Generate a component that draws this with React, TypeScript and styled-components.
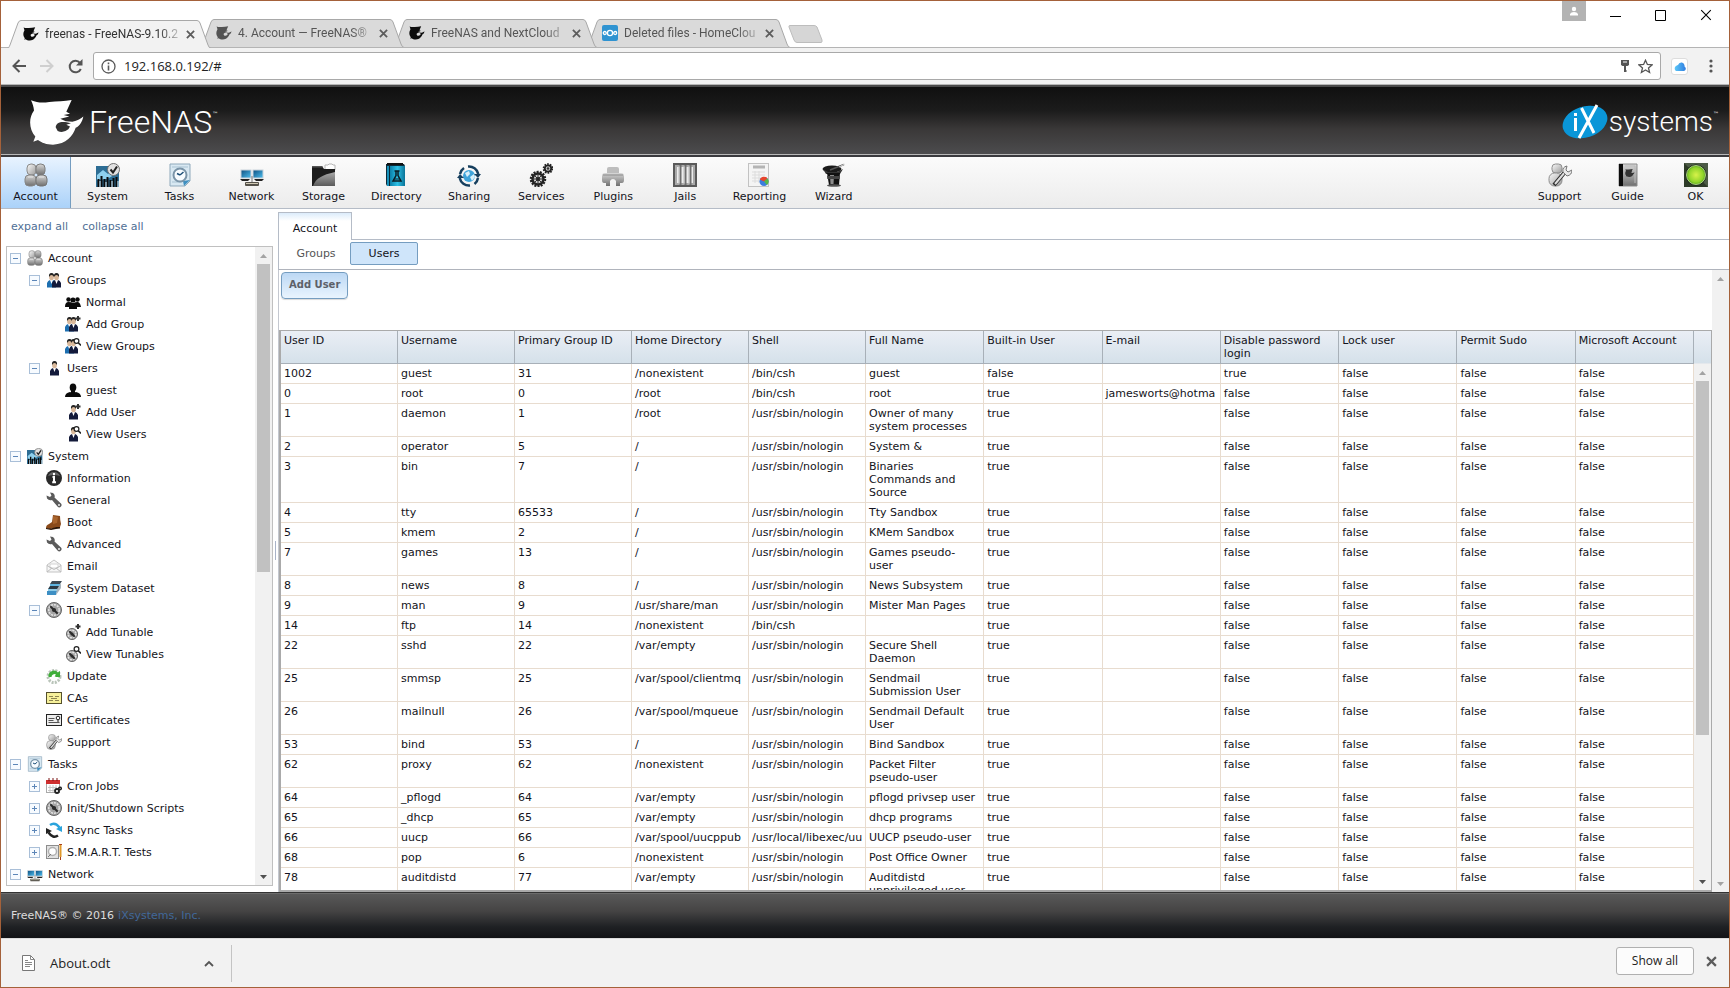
import React from "react";
import styled, { createGlobalStyle, css } from "styled-components";

const ui = `"DejaVu Sans", Verdana, sans-serif`;
const chrome = `"Open Sans", "Segoe UI", "Noto Sans", sans-serif`;

const GlobalStyle = createGlobalStyle`
  *, *::before, *::after { box-sizing: border-box; }
  html, body { margin: 0; padding: 0; }
  body { background: #fff; font-family: ${ui}; font-size: 11px; line-height: 13px; color: #131320; }
  button { font: inherit; color: inherit; background: none; border: 0; padding: 0; margin: 0; }
  ul { list-style: none; margin: 0; padding: 0; }
  a { color: inherit; text-decoration: none; }
  svg { display: block; flex: none; }
`;

/* ---------- shared paint ---------- */

const Paint = styled.svg`
  position: absolute;
`;

const SharedDefs = () => (
  <Paint width="0" height="0" aria-hidden="true">
    <defs>
      <linearGradient id="gray" x1="0" y1="0" x2="0" y2="1">
        <stop offset="0" stopColor="#d8d8d8" />
        <stop offset="1" stopColor="#6f6f6f" />
      </linearGradient>
      <linearGradient id="silver" x1="0" y1="0" x2="1" y2="1">
        <stop offset="0" stopColor="#fafafa" />
        <stop offset="1" stopColor="#9a9a9a" />
      </linearGradient>
      <linearGradient id="screen" x1="0" y1="0" x2="1" y2="1">
        <stop offset="0" stopColor="#0e4f80" />
        <stop offset="1" stopColor="#4fc0f0" />
      </linearGradient>
      <linearGradient id="teal" x1="0" y1="0" x2="1" y2="0">
        <stop offset="0" stopColor="#0b7fa8" />
        <stop offset="0.5" stopColor="#2cc0e6" />
        <stop offset="1" stopColor="#0a7296" />
      </linearGradient>
      <linearGradient id="cloud" x1="0" y1="0" x2="1" y2="0">
        <stop offset="0" stopColor="#5cc8f8" />
        <stop offset="1" stopColor="#2f7de0" />
      </linearGradient>
      <radialGradient id="lamp" cx="0.5" cy="0.5" r="0.55">
        <stop offset="0" stopColor="#d8f24a" />
        <stop offset="0.7" stopColor="#8fd42a" />
        <stop offset="1" stopColor="#3f8a12" />
      </radialGradient>
    </defs>
  </Paint>
);

/* ---------- icons ---------- */

type IconProps = { size?: number };
type IconType = (p: IconProps) => React.ReactElement;

const icon24 =
  (body: React.ReactNode): IconType =>
  ({ size = 24 }) => (
    <svg width={size} height={size} viewBox="0 0 24 24" aria-hidden="true">
      {body}
    </svg>
  );
const icon16 =
  (body: React.ReactNode): IconType =>
  ({ size = 16 }) => (
    <svg width={size} height={size} viewBox="0 0 16 16" aria-hidden="true">
      {body}
    </svg>
  );

const sharkPath =
  "M90 44C112 53 128 51 145 49C168 47 190 47 212 43L196 78L207 84L188 88L205 92L178 99L194 106L214 108C230 104 240 98 247 92C244 106 238 119 224 126C216 150 196 175 156 176C136 176 122 170 111 162L97 167L103 152C84 132 82 96 99 74C98 64 95 54 90 44Z";
const sharkBelly = "M164 124C166 109 182 105 210 112L196 117L207 122L202 130Q186 143 170 135Z";

const Shark = ({ width, height, fill, hole }: { width: number; height: number; fill: string; hole: string }) => (
  <svg width={width} height={height} viewBox="84 40 168 140" preserveAspectRatio="none" aria-hidden="true">
    <path d={sharkPath} fill={fill} />
    <path d={sharkBelly} fill={hole} />
  </svg>
);

const AccountIcon = icon24(
  <>
    <rect x="3" y="1" width="9" height="11" rx="4" fill="url(#silver)" stroke="#8a8a8a" />
    <rect x="12" y="1" width="9" height="11" rx="4" fill="url(#gray)" stroke="#7d7d7d" />
    <rect x="1" y="12" width="11" height="11" rx="4" fill="url(#gray)" stroke="#858585" />
    <rect x="12" y="12" width="11" height="11" rx="4" fill="url(#gray)" stroke="#757575" />
    <path d="M4 14h5M15 14h5" stroke="#e6e6e6" />
  </>
);
const SystemIcon = icon24(
  <>
    <rect x="0" y="3" width="23" height="21" fill="#2d6d94" />
    <path d="M1 12L7 7l5 4 8-6v6l-9 5-10 1z" fill="#8ed0ee" />
    <path d="M2.500 24v-8M5.500 24v-11M8.500 24v-8M11.500 24v-10M14.500 24v-7M17.500 24v-9M20.500 24V14" stroke="#0a0a0a" strokeWidth="2" />
    <path d="M4 24v-6M10 24v-5M16 24v-6M22 24v-6" stroke="#d9edf7" strokeWidth="1" />
    <circle cx="17.500" cy="6.500" r="6" fill="#e2e2e2" stroke="#6f6f6f" />
    <path d="M14.500 6.500l2.500 3L21 3.500" fill="none" stroke="#222" strokeWidth="2" />
  </>
);
const TasksIcon = icon24(
  <>
    <path d="M2 1h20v17l-5 5H2z" fill="#d8e8f2" stroke="#8fa9bb" />
    <path d="M4 4h16M4 19h10" stroke="#a9c3d3" />
    <path d="M22 17l-6 6-1-5z" fill="#3f8fc0" />
    <circle cx="12" cy="12" r="6.500" fill="#f8fcff" stroke="#7a94a8" strokeWidth="2" />
    <path d="M12 12l3.500-3M12 12L9 10.500" stroke="#1c4f78" strokeWidth="1.500" />
  </>
);
const NetworkIcon = icon24(
  <>
    <rect x="1" y="7" width="10" height="8" fill="url(#screen)" stroke="#c8d2da" />
    <rect x="13" y="7" width="10" height="8" fill="url(#screen)" stroke="#c8d2da" />
    <path d="M0 16h10l-2 2H2zM14 16h10l-2 2h-6z" fill="#222" />
    <path d="M12 13v6" stroke="#777" />
    <rect x="5" y="19" width="14" height="4" rx="1" fill="#55524a" />
    <path d="M6 20.500h12" stroke="#cfc8b4" />
  </>
);
const StorageIcon = icon24(
  <>
    <path d="M13 2h3l1-1h3l1 1h2v5H13z" fill="#fff" stroke="#b5b5b5" />
    <path d="M0 3h10l2 3h11v17H0z" fill="#1c1c1c" />
    <path d="M1 23C4 15 10 12 23 9v14z" fill="url(#gray)" opacity=".75" />
    <path d="M0 3h10l1 1.500H0z" fill="#555" />
  </>
);
const DirectoryIcon = icon24(
  <>
    <path d="M2 1h18l1 2v20H3l-1-2z" fill="#0b2a38" />
    <path d="M3 0h16v2H3z" fill="#111" />
    <rect x="6" y="3" width="15" height="20" fill="url(#teal)" />
    <rect x="3" y="3" width="2" height="20" fill="#1791ba" />
    <path d="M10.500 8h5M12 8v4.500L9 18h8l-3-5.500V8" fill="none" stroke="#0a1c24" strokeWidth="1.500" />
    <path d="M10 16h6" stroke="#0a1c24" />
  </>
);
const SharingIcon = icon24(
  <>
    <circle cx="12" cy="13" r="6" fill="#3fa4da" />
    <path d="M8 10l4-2 1 3-3 3zM13 14l4-3 1 3-3 4z" fill="#d8f0fb" />
    <path d="M3 11A9.500 9.500 0 0 1 7 5M11 3.500A9.500 9.500 0 0 1 21.300 11M21 15A9.500 9.500 0 0 1 17.500 21M13 22.500A9.500 9.500 0 0 1 2.700 15" fill="none" stroke="#163f5e" strokeWidth="2.500" />
    <path d="M0 15l3-4 4 4zM17 11h7l-3 4z" fill="#163f5e" />
  </>
);
const ServicesIcon = icon24(
  <>
    <circle cx="9" cy="16" r="7" fill="none" stroke="#222" strokeWidth="2.500" strokeDasharray="2 1.140" />
    <circle cx="9" cy="16" r="5.500" fill="#cfcfcf" stroke="#222" strokeWidth="2.500" />
    <path d="M9 11v10M4 16h10M5.500 12.500l7 7M12.500 12.500l-7 7" stroke="#333" />
    <circle cx="9" cy="16" r="2" fill="#222" />
    <circle cx="19" cy="5.500" r="4.300" fill="none" stroke="#222" strokeWidth="2" strokeDasharray="1.600 1.100" />
    <circle cx="19" cy="5.500" r="3.200" fill="#ccc" stroke="#222" strokeWidth="1.800" />
    <circle cx="19" cy="5.500" r="1.300" fill="#333" />
  </>
);
const PluginsIcon = icon24(
  <>
    <rect x="6" y="4" width="12" height="9" rx="2" fill="#bdbdbd" />
    <path d="M1 13q0-3 3-3h16q3 0 3 3v4q0 3-2 3h-2v3h-4v-5q-1-2-3-2t-3 2v5H5v-3H3q-2 0-2-3z" fill="url(#gray)" />
    <path d="M2 12h20" stroke="#8a8a8a" />
  </>
);
const JailsIcon = icon24(
  <>
    <rect x="1" y="1" width="22" height="22" fill="#ececec" stroke="#5a5a5a" strokeWidth="2" />
    <rect x="3" y="3" width="18" height="18" fill="none" stroke="#a9a9a9" strokeWidth="2" />
    <path d="M7.500 2v20M12.500 2v20M17.500 2v20" stroke="#6f6f6f" strokeWidth="2" />
    <path d="M6 3v18M11 3v18M16 3v18" stroke="#bbb" />
  </>
);
const ReportingIcon = icon24(
  <>
    <rect x="1.500" y=".5" width="20" height="23" fill="#f4f4f4" stroke="#c2c2c2" />
    <path d="M6 4h12" stroke="#b4b4b4" strokeWidth="3" />
    <path d="M5 9h13M5 12h13M5 15h9M5 18h7M8 8v12M12 8v12" stroke="#dcdcdc" />
    <circle cx="17" cy="18.500" r="4.500" fill="#3b7ddd" />
    <path d="M17 18.500L12.800 16.500A4.500 4.500 0 0 1 20.500 15.500z" fill="#e8452c" />
    <path d="M17 18.500L20.500 15.500A4.500 4.500 0 0 1 20 22z" fill="#58b947" />
  </>
);
const WizardIcon = icon24(
  <>
    <ellipse cx="10" cy="6" rx="9.500" ry="3.500" fill="#1a1a1a" />
    <path d="M1 6l3 5h14l3-5-6 3H6z" fill="#333" />
    <path d="M5 10h13l-1 12q-5 2-10 0z" fill="#111" />
    <path d="M8 12h4l-.5 9h-3z" fill="#8d8d8d" />
    <path d="M5 13h13l-.3 3H5.300z" fill="#444" />
    <path d="M8 7L22 1.500" stroke="#555" strokeWidth="1.500" />
    <path d="M17 4l6-3" stroke="#ddd" />
    <ellipse cx="12" cy="22.500" rx="7" ry="1.300" fill="#555" />
  </>
);
const SupportIcon = icon24(
  <>
    <rect x="4" y="1" width="10" height="9" rx="3.500" fill="url(#silver)" stroke="#8d8d8d" />
    <rect x="1" y="10" width="13" height="13" rx="5.500" fill="url(#silver)" stroke="#8d8d8d" />
    <path d="M6 22L17 9" stroke="#2a2a2a" strokeWidth="4" />
    <path d="M7 21L17.500 8.500" stroke="#dedede" strokeWidth="2" />
    <path d="M15 9q-1-5 4-6l-1 4 2 2 4-2q0 5-5 6z" fill="#e8e8e8" stroke="#777" />
  </>
);
const GuideIcon = ({ size = 24 }: IconProps) => (
  <svg width={size} height={size} viewBox="0 0 24 24" aria-hidden="true">
    <path d="M3 1h18v22H3z" fill="url(#gray)" stroke="#8c8c8c" />
    <rect x="3" y="1" width="4" height="22" fill="#0b0b0b" />
    <g transform="translate(4 3.500) scale(.06)">
      <path d={sharkPath} fill="#333" />
    </g>
    <path d="M9 3h10v17" fill="none" stroke="#bbb" />
  </svg>
);
const OkIcon = icon24(
  <>
    <rect width="24" height="24" fill="#2d3a28" />
    <path d="M0 0h24v24z" fill="#4c5a46" />
    <circle cx="12" cy="12" r="10.500" fill="#142410" />
    <circle cx="12" cy="12" r="9.500" fill="url(#lamp)" stroke="#c9e8a0" strokeWidth=".8" />
  </>
);

const person = (x: number, coat: string) => (
  <g transform={`translate(${x} 0)`}>
    <path d="M0 15.500V11q1-2.500 3-3h3q2 .5 3 3v4.500z" fill={coat} />
    <path d="M3 8h3l-1.500 4z" fill="#fff" />
    <ellipse cx="4.500" cy="5" rx="2.400" ry="3.200" fill="#d9b89a" />
    <path d="M2 5q-.5-4 2.500-4T7 5q-1-2-2.500-2T2 5z" fill="#222" />
  </g>
);
const plusBadge = <path d="M10.500 2.500h5M13 0v5" stroke="#333" strokeWidth="2" />;
const lensBadge = (
  <>
    <circle cx="11.500" cy="3" r="2.400" fill="#fff" stroke="#222" strokeWidth="1.200" />
    <path d="M13.200 4.700L16 7.500" stroke="#222" strokeWidth="1.600" />
  </>
);
const GroupsIcon = icon16(<>{person(1, "#1d6fb0")}{person(6, "#131a3a")}</>);
const GroupAddIcon = icon16(<>{person(0, "#1d6fb0")}{person(4, "#131a3a")}{plusBadge}</>);
const GroupViewIcon = icon16(<>{person(0, "#1d6fb0")}{person(4, "#131a3a")}{lensBadge}</>);
const UserIcon = icon16(person(4, "#131a3a"));
const UserAddIcon = icon16(<>{person(4, "#131a3a")}{plusBadge}</>);
const UserViewIcon = icon16(<>{person(4, "#131a3a")}{lensBadge}</>);
const NormalIcon = icon16(
  <g fill="#0a0a0a">
    <circle cx="3.500" cy="5.500" r="2.200" />
    <circle cx="8" cy="6" r="2.600" />
    <circle cx="12.500" cy="5.500" r="2.200" />
    <path d="M0 13q0-5 3.500-5T7 9h2q1-1 3.500-1T16 13h-4v2H4v-2z" />
  </g>
);
const GuestIcon = icon16(
  <g fill="#0a0a0a">
    <ellipse cx="8" cy="5.500" rx="3.300" ry="4" />
    <path d="M6 8h4v3H6zM0 15q0-4 5-5l3 1 3-1q5 1 5 5z" />
  </g>
);
const InfoIcon = icon16(
  <>
    <circle cx="8" cy="8" r="8" fill="#2a2a2a" />
    <path d="M2 6a6.500 6.500 0 0 1 12 0q-6-2-12 0z" fill="#666" />
    <path d="M8 3v2.200M6.500 7H8v5M6.200 12.200h3.800" stroke="#fff" strokeWidth="2" />
  </>
);
const WrenchIcon = icon16(
  <>
    <path d="M4 .5L7 1q2.500 2 1.500 4.500l6.500 6q1.500 2-.5 3.500-1.500 1-3-.5L6 8Q3 9 1 6.500L.5 3.500 4 5l1.500-1.500z" fill="#5b5b5b" />
    <circle cx="13" cy="13" r="1" fill="#eee" />
  </>
);
const BootIcon = icon16(
  <>
    <path d="M7 1l7 1q0 4 1 8l-1 3-4 .5L4 15l-4-1q0-3 3-4l3-2z" fill="#8a4a1a" />
    <path d="M7 2l5 1-1 6-4 1z" fill="#a9642c" />
    <path d="M0 14l5 .5 5-1.500 4 0v1.500l-4 .5-5 1-5-1z" fill="#2c1505" />
  </>
);
const EmailIcon = icon16(
  <>
    <path d="M1 7l7-5 7 5v7H1z" fill="#f6f6f6" stroke="#c4c4c4" />
    <path d="M4 6h8v4H4z" fill="#fff" stroke="#d4d4d4" />
    <path d="M1 7.500l7 4 7-4M1 14l5-4M15 14l-5-4" fill="none" stroke="#bdbdbd" />
  </>
);
const DatasetIcon = icon16(
  <>
    <path d="M6 1h10l-2 3H4z" fill="#3c4a55" />
    <path d="M4 4h10v3H4z" fill="#5fb4e0" />
    <path d="M4 6h10l-1 3H2z" fill="#2b3a45" />
    <path d="M2 9h9v3H2z" fill="#8ccbe8" />
    <path d="M1 11h10l-1 4H1z" fill="#3d8fc4" />
    <path d="M11 9l4-6v5l-5 7z" fill="#a8b4bc" />
  </>
);
const gauge = (cx: number, cy: number, r: number) => (
  <>
    <circle cx={cx} cy={cy} r={r} fill="#a4a4a4" stroke="#666" />
    <circle cx={cx} cy={cy} r={r * 0.7} fill="none" stroke="#e6e6e6" strokeWidth="1.500" strokeDasharray="2 1" />
    <path d={`M${cx - r * 0.5} ${cy - r * 0.5}L${cx + r * 0.5} ${cy + r * 0.5}`} stroke="#2c2c2c" strokeWidth="2" />
    <circle cx={cx} cy={cy} r={r * 0.28} fill="#2c2c2c" />
  </>
);
const GaugeIcon = icon16(gauge(8, 8, 7.5));
const GaugeAddIcon = icon16(<>{gauge(7, 10, 5.5)}{plusBadge}</>);
const GaugeViewIcon = icon16(<>{gauge(7, 10, 5.5)}{lensBadge}</>);
const UpdateIcon = icon16(
  <>
    <circle cx="8" cy="8.500" r="6" fill="none" stroke="#b9c4b9" strokeWidth="3" strokeDasharray="2 1.200" />
    <path d="M2.500 9A5.500 5.500 0 0 1 12 4.500L14 3v6H8l2-2.500A3 3 0 0 0 5.500 9z" fill="#3fae3a" />
    <circle cx="8" cy="10" r="2" fill="#fff" />
  </>
);
const CaIcon = icon16(
  <>
    <rect x=".5" y="2.500" width="15" height="11" fill="#f6f09a" stroke="#55502c" />
    <path d="M3 6.500h4M9 6.500h4M5 8.500h6M3 10.500h4M9 10.500h4" stroke="#8c8450" />
  </>
);
const CertIcon = icon16(
  <>
    <rect x=".5" y="2.500" width="15" height="11" fill="#ededed" stroke="#222" />
    <path d="M2.500 6.500h6M2.500 8.500h5M2.500 10.500h11" stroke="#555" />
    <circle cx="12" cy="6" r="1.800" fill="#fff" stroke="#222" />
    <path d="M12 8v2" stroke="#222" />
  </>
);
const CronIcon = icon16(
  <>
    <rect x=".5" y="2.500" width="13" height="12" fill="#fff" stroke="#a9a9a9" />
    <path d="M0 2h14v4H0z" fill="#cf2f2f" />
    <path d="M3 0v3M7 0v3M11 0v3" stroke="#7d1414" />
    <path d="M2 9.500h9M2 12.500h7M4 7v7M7 7v7M10 7v4" stroke="#c8c8c8" />
    <circle cx="11" cy="13" r="2" fill="none" stroke="#222" strokeWidth="1.800" />
    <circle cx="14" cy="10.500" r="1.300" fill="none" stroke="#222" strokeWidth="1.500" />
  </>
);
const RsyncIcon = icon16(
  <>
    <path d="M4 3Q9-.5 13.500 5.500" fill="none" stroke="#2aa3dc" strokeWidth="2.500" />
    <path d="M16 4v6l-6-3z" fill="#2aa3dc" />
    <path d="M12 13.500Q7 17 2.500 10.500" fill="none" stroke="#222" strokeWidth="2.500" />
    <path d="M0 12V6l6 3z" fill="#222" />
  </>
);
const SmartIcon = icon16(
  <>
    <rect x=".5" y="1.500" width="12" height="13" fill="#e2e2e2" stroke="#8d8d8d" />
    <circle cx="6.500" cy="7.500" r="4" fill="#fff" stroke="#b0b0b0" strokeWidth="1.500" />
    <path d="M2 13l3-3" stroke="#777" />
    <path d="M14.500 0v13" stroke="#e09a2c" strokeWidth="2" />
    <path d="M14.500 13v3M13 .5h3" stroke="#a8401c" />
  </>
);

/* ---------- browser window ---------- */

const Window = styled.div`
  display: flex;
  flex-direction: column;
  height: 100vh;
  border: 1px solid #a4613a;
  background: #fff;
  overflow: hidden;
`;
const TitleBar = styled.header`
  display: flex;
  justify-content: space-between;
  height: 46px;
  flex: none;
  font-family: ${chrome};
  padding: 0 1px 0 6px;
`;
const TabStrip = styled.div`
  display: flex;
  align-items: flex-end;
`;
const BrowserTab = styled.div<{ $active?: boolean; $order: number }>`
  position: relative;
  z-index: ${(p) => p.$order};
  display: flex;
  align-items: center;
  gap: 6px;
  width: 204px;
  height: 28px;
  margin-right: -11px;
  padding: 0 16px;
  font-family: Roboto, ${chrome};
  font-size: 12px;
  line-height: 16px;
  color: ${(p) => (p.$active ? "#333" : "#555")};
  margin-bottom: ${(p) => (p.$active ? "-1px" : "0")};
`;
const TabShape = styled.svg`
  position: absolute;
  inset: 0;
  z-index: -1;
`;
const TabTitle = styled.span`
  flex: 1;
  min-width: 0;
  overflow: hidden;
  white-space: nowrap;
  mask-image: linear-gradient(to right, #000 84%, rgba(0, 0, 0, 0.2));
`;
const GlyphButton = styled.button`
  display: grid;
  place-items: center;
  flex: none;
`;
const FavBox = styled.span<{ $fade?: boolean }>`
  display: grid;
  place-items: center;
  width: 16px;
  height: 16px;
  opacity: ${(p) => (p.$fade ? 0.65 : 1)};
`;
const NewTab = styled.button`
  margin: 0 0 4px 9px;
`;
const WindowControls = styled.div`
  display: flex;
  align-items: flex-start;
`;
const Avatar = styled.button`
  display: grid;
  place-items: center;
  width: 24px;
  height: 20px;
  background: #b3b3b3;
  margin-right: 7px;
`;
const ControlButton = styled(GlyphButton)`
  width: 45px;
  height: 28px;
`;

const AddressRow = styled.div`
  display: flex;
  align-items: center;
  flex: none;
  height: 38px;
  background: #f2f2f2;
  border-top: 1px solid #b4b4b4;
  border-bottom: 1px solid #b6b6b6;
  padding: 0 4px;
`;
const NavButton = styled(GlyphButton)`
  width: 28px;
  height: 28px;
`;
const Omnibox = styled.label`
  display: flex;
  align-items: center;
  flex: 1;
  height: 28px;
  background: #fff;
  border: 1px solid #a9a9a9;
  border-radius: 3px;
  padding: 0 7px;
  gap: 8px;
  margin: 0 10px 0 4px;
`;
const UrlInput = styled.input`
  flex: 1;
  border: 0;
  outline: 0;
  padding: 0;
  font: 13px/20px ${chrome};
  color: #222;
  background: transparent;
`;
const Extension = styled(GlyphButton)`
  width: 17px;
  height: 17px;
  background: #fff;
  border: 1px solid #ddd;
  border-radius: 3px;
  margin-right: 9px;
`;

const CloseGlyph = ({ size = 9, color = "#5c5c5c", width = 2 }) => (
  <svg width={size} height={size} viewBox="0 0 10 10" aria-hidden="true">
    <path d="M1 1l8 8M9 1L1 9" stroke={color} strokeWidth={width} />
  </svg>
);

const browserTabs = [
  { title: "freenas - FreeNAS-9.10.2", icon: "shark" },
  { title: "4. Account — FreeNAS®", icon: "faded" },
  { title: "FreeNAS and NextCloud", icon: "shark" },
  { title: "Deleted files - HomeClou", icon: "cloud" },
];

const BrowserHead = () => (
  <>
    <TitleBar>
      <TabStrip>
        {browserTabs.map((t, i) => (
          <BrowserTab key={t.title} $active={i === 0} $order={10 - i}>
            <TabShape width="204" height="28" viewBox="0 0 204 28" aria-hidden="true">
              <path
                d="M0 28.500C2 28 2 27 3 25L11 3Q12 .5 14 .5H190Q192 .5 193 3L201 25Q202 28 204 28.500"
                fill={i === 0 ? "#f2f2f2" : "#dadada"}
                stroke="#a8a8a8"
              />
            </TabShape>
            <FavBox $fade={t.icon === "faded"}>
              {t.icon === "cloud" ? (
                <svg width="16" height="16" viewBox="0 0 16 16" aria-hidden="true">
                  <rect width="16" height="16" rx="2" fill="#2f93d1" />
                  <g fill="none" stroke="#fff" strokeWidth="1.300">
                    <circle cx="8" cy="8" r="2.600" />
                    <circle cx="2.800" cy="8" r="1.500" />
                    <circle cx="13.200" cy="8" r="1.500" />
                  </g>
                </svg>
              ) : (
                <Shark width={16} height={14} fill="#0c0c0c" hole={i === 0 ? "#f2f2f2" : "#dadada"} />
              )}
            </FavBox>
            <TabTitle>{t.title}</TabTitle>
            <GlyphButton aria-label={`Close ${t.title}`}>
              <CloseGlyph />
            </GlyphButton>
          </BrowserTab>
        ))}
        <NewTab aria-label="New tab">
          <svg width="35" height="18" viewBox="0 0 35 18" aria-hidden="true">
            <path d="M1 2Q.5.500 2 .5H26Q28 .5 29 2L34 15Q34.500 17.500 33 17.500H9Q7 17.500 6 15Z" fill="#d6d6d6" stroke="#bdbdbd" />
          </svg>
        </NewTab>
      </TabStrip>
      <WindowControls>
        <Avatar aria-label="Profile">
          <svg width="10" height="10" viewBox="0 0 10 10" fill="#fff" aria-hidden="true">
            <circle cx="5" cy="3" r="2.200" />
            <path d="M1 9.500V8q1-2 4-2t4 2v1.500z" />
          </svg>
        </Avatar>
        <ControlButton aria-label="Minimize">
          <svg width="11" height="11" aria-hidden="true"><path d="M0 6.500h11" stroke="#000" /></svg>
        </ControlButton>
        <ControlButton aria-label="Maximize">
          <svg width="11" height="11" aria-hidden="true"><path d="M.5.500h10v10H.5z" fill="none" stroke="#000" /></svg>
        </ControlButton>
        <ControlButton aria-label="Close window">
          <CloseGlyph size={12} color="#000" width={0.9} />
        </ControlButton>
      </WindowControls>
    </TitleBar>
    <AddressRow>
      <NavButton aria-label="Back">
        <svg width="14" height="14" viewBox="0 0 14 14" aria-hidden="true">
          <path d="M14 7H1.500M7.500 1l-6 6 6 6" fill="none" stroke="#555" strokeWidth="2" />
        </svg>
      </NavButton>
      <NavButton aria-label="Forward">
        <svg width="14" height="14" viewBox="0 0 14 14" aria-hidden="true">
          <path d="M0 7h12.500M6.500 1l6 6-6 6" fill="none" stroke="#cfcfcf" strokeWidth="2" />
        </svg>
      </NavButton>
      <NavButton aria-label="Reload">
        <svg width="15" height="15" viewBox="0 0 15 15" aria-hidden="true">
          <path d="M12.800 10A5.800 5.800 0 1 1 12 3.800" fill="none" stroke="#555" strokeWidth="2" />
          <path d="M14.500 0v6.500H8z" fill="#555" />
        </svg>
      </NavButton>
      <Omnibox>
        <svg width="15" height="15" viewBox="0 0 15 15" aria-hidden="true">
          <circle cx="7.500" cy="7.500" r="6.500" fill="none" stroke="#5a5a5a" strokeWidth="1.300" />
          <path d="M7.500 3.500v1.700M7.500 6.500v5" stroke="#5a5a5a" strokeWidth="1.600" />
        </svg>
        <UrlInput aria-label="Address" defaultValue="192.168.0.192/#" />
        <svg width="10" height="14" viewBox="0 0 10 14" aria-hidden="true">
          <path d="M1 1h8v5L7.500 7h-5L1 6z" fill="#555" />
          <path d="M3 3h4" stroke="#fff" />
          <path d="M5 7v6M5 12h1.500" stroke="#555" strokeWidth="2" />
        </svg>
        <svg width="15" height="15" viewBox="0 0 15 15" aria-hidden="true">
          <path d="M7.500 1.200l1.900 4.300 4.600.4-3.500 3 1.100 4.600-4.100-2.500-4.100 2.500 1.100-4.600-3.500-3 4.600-.4z" fill="none" stroke="#555" strokeWidth="1.300" />
        </svg>
      </Omnibox>
      <Extension aria-label="Cloud extension">
        <svg width="13" height="9" viewBox="0 0 13 9" aria-hidden="true">
          <path d="M3 9a3 3 0 0 1 0-5Q4.500 3 5 3q1-3 4-2.500Q12 1.500 11.500 4.500 13 5.500 12.800 7T11 9z" fill="url(#cloud)" />
        </svg>
      </Extension>
      <NavButton aria-label="Menu">
        <svg width="4" height="14" viewBox="0 0 4 14" fill="#555" aria-hidden="true">
          <circle cx="2" cy="2" r="1.600" /><circle cx="2" cy="7" r="1.600" /><circle cx="2" cy="12" r="1.600" />
        </svg>
      </NavButton>
    </AddressRow>
  </>
);

/* ---------- FreeNAS banner and toolbar ---------- */

const Banner = styled.div`
  display: flex;
  align-items: center;
  justify-content: space-between;
  flex: none;
  height: 72px;
  padding: 2px 10px 0 28px;
  background: linear-gradient(#101010, #1c1c1c 35%, #3a3838 62%, #4d4d4f);
  border-top: 2px solid #4a4a4a;
  border-bottom: 2px solid #3a3a3e;
  box-shadow: inset 0 -1px 0 #b8b8b8;
  color: #fff;
`;
const Brand = styled.a<{ $gap: number }>`
  display: flex;
  align-items: center;
  gap: ${(p) => p.$gap}px;
  color: #fff;
`;
const WordMark = styled.span<{ $size: number }>`
  display: flex;
  font-family: Roboto, "Open Sans", sans-serif;
  font-weight: 300;
  font-size: ${(p) => p.$size}px;
  line-height: 36px;
`;
const Mark = styled.sup`
  font: 6px/8px ${ui};
  padding-top: 6px;
`;

const Toolbar = styled.nav`
  display: flex;
  justify-content: space-between;
  flex: none;
  height: 52px;
  background: linear-gradient(#fbfbfb, #ececec);
  border-bottom: 1px solid #b5bcc7;
`;
const ToolGroup = styled.div`
  display: flex;
  gap: 2px;
`;
const ToolButton = styled.button<{ $active?: boolean; $narrow?: boolean }>`
  display: flex;
  flex-direction: column;
  align-items: center;
  min-width: ${(p) => (p.$narrow ? 66 : 70)}px;
  padding: 6px 10px 0;
  gap: 2px;
  border-right: 1px solid transparent;
  ${(p) =>
    p.$active &&
    css`
      background: linear-gradient(#e8f3ff, #abd2f9);
      border-right-color: #759dc0;
    `}
`;

const tools: [string, IconType][] = [
  ["Account", AccountIcon], ["System", SystemIcon], ["Tasks", TasksIcon], ["Network", NetworkIcon],
  ["Storage", StorageIcon], ["Directory", DirectoryIcon], ["Sharing", SharingIcon], ["Services", ServicesIcon],
  ["Plugins", PluginsIcon], ["Jails", JailsIcon], ["Reporting", ReportingIcon], ["Wizard", WizardIcon],
];
const rightTools: [string, IconType][] = [["Support", SupportIcon], ["Guide", GuideIcon], ["OK", OkIcon]];

const ToolLabel = styled.span`
  line-height: 16px;
`;

/* ---------- scrollbars ---------- */

const Track = styled.div`
  display: flex;
  flex-direction: column;
  flex: 1;
  width: 17px;
  background: #f1f1f1;
`;
const ArrowBox = styled.div`
  display: grid;
  place-items: center;
  height: 17px;
  flex: none;
`;
const Rail = styled.div`
  flex: 1;
  padding: 0 2px;
`;
const Thumb = styled.div<{ $share: number }>`
  height: ${(p) => p.$share}%;
  background: #c1c1c1;
`;
const Scrollbar = ({ share, down = true }: { share: number; down?: boolean }) => (
  <Track aria-hidden="true">
    <ArrowBox>
      <svg width="7" height="4"><path d="M0 4h7L3.500 0z" fill="#a3a3a3" /></svg>
    </ArrowBox>
    <Rail>
      <Thumb $share={share} />
    </Rail>
    <ArrowBox>
      <svg width="7" height="4"><path d="M0 0h7L3.500 4z" fill={down ? "#505050" : "#a3a3a3"} /></svg>
    </ArrowBox>
  </Track>
);

/* ---------- navigation tree ---------- */

const Workspace = styled.div`
  display: flex;
  flex: 1;
  min-height: 0;
`;
const Sidebar = styled.aside`
  display: flex;
  flex-direction: column;
  flex: none;
  width: 272px;
  padding: 0 0 6px 5px;
`;
const TreeActions = styled.div`
  display: flex;
  gap: 14px;
  padding: 11px 5px 13px;
  color: #4f6f95;
`;
const TreeBox = styled.div`
  display: flex;
  flex: 1;
  min-height: 0;
  border: 1px solid #c0c0c0;
`;
const Tree = styled.ul`
  flex: 1;
  overflow: hidden;
`;
const TreeRow = styled.li<{ $depth: number }>`
  display: flex;
  align-items: center;
  height: 22px;
  padding-left: ${(p) => 3 + p.$depth * 19}px;
`;
const Expander = styled.button`
  display: grid;
  place-items: center;
  width: 11px;
  height: 11px;
  margin-right: 6px;
  border: 1px solid #a9bfd8;
  background: #f7fbff;
`;
const NoExpander = styled.span`
  width: 17px;
`;
const TreeLink = styled.a`
  display: flex;
  align-items: center;
  gap: 5px;
  white-space: nowrap;
`;

type Node = [depth: number, label: string, icon: IconType, state?: "open" | "closed"];
const nodes: Node[] = [
  [0, "Account", AccountIcon, "open"],
  [1, "Groups", GroupsIcon, "open"],
  [2, "Normal", NormalIcon],
  [2, "Add Group", GroupAddIcon],
  [2, "View Groups", GroupViewIcon],
  [1, "Users", UserIcon, "open"],
  [2, "guest", GuestIcon],
  [2, "Add User", UserAddIcon],
  [2, "View Users", UserViewIcon],
  [0, "System", SystemIcon, "open"],
  [1, "Information", InfoIcon],
  [1, "General", WrenchIcon],
  [1, "Boot", BootIcon],
  [1, "Advanced", WrenchIcon],
  [1, "Email", EmailIcon],
  [1, "System Dataset", DatasetIcon],
  [1, "Tunables", GaugeIcon, "open"],
  [2, "Add Tunable", GaugeAddIcon],
  [2, "View Tunables", GaugeViewIcon],
  [1, "Update", UpdateIcon],
  [1, "CAs", CaIcon],
  [1, "Certificates", CertIcon],
  [1, "Support", SupportIcon],
  [0, "Tasks", TasksIcon, "open"],
  [1, "Cron Jobs", CronIcon, "closed"],
  [1, "Init/Shutdown Scripts", GaugeIcon, "closed"],
  [1, "Rsync Tasks", RsyncIcon, "closed"],
  [1, "S.M.A.R.T. Tests", SmartIcon, "closed"],
  [0, "Network", NetworkIcon, "open"],
];

const Splitter = styled.div`
  display: flex;
  align-items: center;
  justify-content: flex-end;
  width: 5px;
  flex: none;
`;
const SplitterGrip = styled.div`
  width: 1px;
  height: 19px;
  margin-right: 2px;
  background: #a9b3c8;
`;

/* ---------- main pane ---------- */

const Main = styled.main`
  display: flex;
  flex-direction: column;
  flex: 1;
  min-width: 0;
  padding-top: 3px;
`;
const TabBar = styled.div`
  display: flex;
  height: 28px;
  flex: none;
`;
const PaneTab = styled.button`
  width: 74px;
  padding-top: 4px;
  border: 1px solid #b5bcc7;
  border-bottom: 0;
  background: linear-gradient(#dcecfb, #fff 8px);
`;
const TabBarRest = styled.div`
  flex: 1;
  border-bottom: 1px solid #b5bcc7;
`;
const SubTabs = styled.div`
  display: flex;
  gap: 1px;
  flex: none;
  height: 30px;
  padding: 2px 0 4px;
  border-left: 1px solid #b5bcc7;
  border-bottom: 1px solid #b0b4bc;
`;
const SubTab = styled.button<{ $active?: boolean }>`
  width: ${(p) => (p.$active ? 68 : 70)}px;
  color: #555;
  padding-left: ${(p) => (p.$active ? 0 : 4)}px;
  ${(p) =>
    p.$active &&
    css`
      color: #131320;
      border: 1px solid #759dc0;
      border-radius: 2px;
      background: #cfe5fa;
    `}
`;
const PaneBody = styled.div`
  display: flex;
  flex: 1;
  min-height: 0;
  border-left: 1px solid #c4c8d0;
`;
const PaneContent = styled.div`
  display: flex;
  flex-direction: column;
  flex: 1;
  min-width: 0;
`;
const PaneScroll = styled.div`
  display: flex;
`;
const Actions = styled.div`
  flex: none;
  height: 60px;
  padding: 2px;
`;
const AddUser = styled.button`
  height: 27px;
  padding: 0 7px 2px;
  font-weight: 700;
  font-size: 10px;
  color: #5c6068;
  border: 1px solid #759dc0;
  border-radius: 4px;
  background: linear-gradient(#bcd8f4, #e9f4fe);
  box-shadow: 0 1px 1px rgba(0, 0, 0, 0.15);
`;
const GridFrame = styled.div`
  display: flex;
  flex: 1;
  min-height: 0;
  border: 1px solid #aaa;
  border-left-width: 2px;
  border-bottom-width: 2px;
`;
const TableClip = styled.div`
  flex: 1;
  min-width: 0;
  overflow: hidden;
`;
const Table = styled.table`
  width: 100%;
  table-layout: fixed;
  border-collapse: separate;
  border-spacing: 0;
`;
const NarrowCol = styled.col`
  width: 117px;
`;
const Th = styled.th`
  height: 33px;
  padding: 3px;
  font-weight: 400;
  text-align: left;
  vertical-align: top;
  background: linear-gradient(#eaeef5, #d5e1ea);
  border-right: 1px solid #a8b0b8;
  border-bottom: 1px solid #a8b0b8;
`;
const Td = styled.td`
  padding: 3px;
  vertical-align: top;
  overflow: hidden;
  white-space: pre-line;
  height: 20px;
  border-right: 1px solid #e8dccf;
  border-bottom: 1px solid #e8dccf;
`;
const GridSide = styled.div`
  display: flex;
  flex-direction: column;
`;
const SideHead = styled.div`
  height: 33px;
  background: linear-gradient(#eaeef5, #d5e1ea);
  border-bottom: 1px solid #e4e8ec;
`;

const columns = [
  "User ID", "Username", "Primary Group ID", "Home Directory", "Shell", "Full Name",
  "Built-in User", "E-mail", "Disable password login", "Lock user", "Permit Sudo", "Microsoft Account",
];

const nologin = "/usr/sbin/nologin";
const users: string[][] = [
  ["1002", "guest", "31", "/nonexistent", "/bin/csh", "guest"],
  ["0", "root", "0", "/root", "/bin/csh", "root"],
  ["1", "daemon", "1", "/root", nologin, "Owner of many\nsystem processes"],
  ["2", "operator", "5", "/", nologin, "System &"],
  ["3", "bin", "7", "/", nologin, "Binaries\nCommands and\nSource"],
  ["4", "tty", "65533", "/", nologin, "Tty Sandbox"],
  ["5", "kmem", "2", "/", nologin, "KMem Sandbox"],
  ["7", "games", "13", "/", nologin, "Games pseudo-\nuser"],
  ["8", "news", "8", "/", nologin, "News Subsystem"],
  ["9", "man", "9", "/usr/share/man", nologin, "Mister Man Pages"],
  ["14", "ftp", "14", "/nonexistent", "/bin/csh", ""],
  ["22", "sshd", "22", "/var/empty", nologin, "Secure Shell\nDaemon"],
  ["25", "smmsp", "25", "/var/spool/clientmq", nologin, "Sendmail\nSubmission User"],
  ["26", "mailnull", "26", "/var/spool/mqueue", nologin, "Sendmail Default\nUser"],
  ["53", "bind", "53", "/", nologin, "Bind Sandbox"],
  ["62", "proxy", "62", "/nonexistent", nologin, "Packet Filter\npseudo-user"],
  ["64", "_pflogd", "64", "/var/empty", nologin, "pflogd privsep user"],
  ["65", "_dhcp", "65", "/var/empty", nologin, "dhcp programs"],
  ["66", "uucp", "66", "/var/spool/uucppub", "/usr/local/libexec/uu", "UUCP pseudo-user"],
  ["68", "pop", "6", "/nonexistent", nologin, "Post Office Owner"],
  ["78", "auditdistd", "77", "/var/empty", nologin, "Auditdistd\nunprivileged user"],
];

/* ---------- footers ---------- */

const Footer = styled.footer`
  display: flex;
  align-items: center;
  gap: 4px;
  flex: none;
  height: 46px;
  padding: 0 10px;
  border-top: 1px solid #333;
  background: linear-gradient(#5a5a5a, #454444 40%, #1f2124 75%, #121316);
  box-shadow: inset 0 1px 0 #6c6c6c;
  color: #dcdcdc;
`;
const FooterLink = styled.a`
  color: #41689a;
`;
const DownloadBar = styled.div`
  display: flex;
  align-items: center;
  flex: none;
  height: 49px;
  background: #f2f2f2;
  border-top: 1px solid #dcdcdc;
  font: 13px/20px ${chrome};
  color: #222;
`;
const Download = styled.button`
  display: flex;
  align-items: center;
  gap: 15px;
  width: 231px;
  height: 37px;
  padding: 0 17px 0 21px;
  border-right: 1px solid #c4c4c4;
`;
const FileName = styled.span`
  flex: 1;
  text-align: left;
`;
const BarActions = styled.div`
  display: flex;
  margin-left: auto;
  padding-bottom: 4px;
`;
const ShowAll = styled.button`
  height: 28px;
  width: 78px;
  font-size: 12px;
  background: #fcfcfc;
  border: 1px solid #b0b0b0;
  border-radius: 3px;
`;
const CloseDownloads = styled(GlyphButton)`
  width: 35px;
  height: 28px;
`;

export default function App() {
  return (
    <Window>
      <GlobalStyle />
      <SharedDefs />
      <BrowserHead />
      <Banner>
        <Brand href="#" aria-label="FreeNAS" $gap={4}>
          <Shark width={56} height={47} fill="#fff" hole="#333" />
          <WordMark $size={32}>
            FreeNAS<Mark>™</Mark>
          </WordMark>
        </Brand>
        <Brand href="#" aria-label="iXsystems" $gap={1}>
          <svg width="46" height="36" viewBox="0 0 46 36" aria-hidden="true">
            <ellipse cx="23" cy="18" rx="23" ry="15.500" transform="rotate(-18 23 18)" fill="#0a96d8" />
            <path d="M13.500 14v13M13.500 9v3" stroke="#fff" strokeWidth="3" />
            <path d="M17 34L35 1M19.500 4L32 29" stroke="#fff" strokeWidth="3" />
          </svg>
          <WordMark $size={28}>
            systems<Mark>™</Mark>
          </WordMark>
        </Brand>
      </Banner>
      <Toolbar>
        <ToolGroup>
          {tools.map(([label, Icon], i) => (
            <ToolButton key={label} $active={i === 0}>
              <Icon />
              <ToolLabel>{label}</ToolLabel>
            </ToolButton>
          ))}
        </ToolGroup>
        <ToolGroup>
          {rightTools.map(([label, Icon]) => (
            <ToolButton key={label} $narrow>
              <Icon />
              <ToolLabel>{label}</ToolLabel>
            </ToolButton>
          ))}
        </ToolGroup>
      </Toolbar>
      <Workspace>
        <Sidebar>
          <TreeActions>
            <a href="#expand">expand all</a>
            <a href="#collapse">collapse all</a>
          </TreeActions>
          <TreeBox>
            <Tree>
              {nodes.map(([depth, label, Icon, state], i) => (
                <TreeRow key={i} $depth={depth}>
                  {state ? (
                    <Expander aria-label={`Toggle ${label}`} aria-expanded={state === "open"}>
                      <svg width="5" height="5" aria-hidden="true">
                        <path d={state === "open" ? "M0 2.500h5" : "M0 2.500h5M2.500 0v5"} stroke="#5c86b8" />
                      </svg>
                    </Expander>
                  ) : (
                    <NoExpander />
                  )}
                  <TreeLink href="#">
                    <Icon size={16} />
                    {label}
                  </TreeLink>
                </TreeRow>
              ))}
            </Tree>
            <PaneScroll>
              <Scrollbar share={51} />
            </PaneScroll>
          </TreeBox>
        </Sidebar>
        <Splitter>
          <SplitterGrip />
        </Splitter>
        <Main>
          <TabBar>
            <PaneTab>Account</PaneTab>
            <TabBarRest />
          </TabBar>
          <SubTabs>
            <SubTab>Groups</SubTab>
            <SubTab $active>Users</SubTab>
          </SubTabs>
          <PaneBody>
            <PaneContent>
              <Actions>
                <AddUser>Add User</AddUser>
              </Actions>
              <GridFrame>
                <TableClip>
                  <Table>
                    <colgroup>
                      {columns.map((c, i) => (i < 5 ? <NarrowCol key={c} /> : <col key={c} />))}
                    </colgroup>
                    <thead>
                      <tr>
                        {columns.map((c) => (
                          <Th key={c} scope="col">{c}</Th>
                        ))}
                      </tr>
                    </thead>
                    <tbody>
                      {users.map((u, r) => (
                        <tr key={u[0]}>
                          {u.map((v, i) => (
                            <Td key={i}>{v}</Td>
                          ))}
                          <Td>{r === 0 ? "false" : "true"}</Td>
                          <Td>{u[1] === "root" ? "jamesworts@hotma" : ""}</Td>
                          <Td>{r === 0 ? "true" : "false"}</Td>
                          <Td>false</Td>
                          <Td>false</Td>
                          <Td>false</Td>
                        </tr>
                      ))}
                    </tbody>
                  </Table>
                </TableClip>
                <GridSide>
                  <SideHead />
                  <Scrollbar share={72} />
                </GridSide>
              </GridFrame>
            </PaneContent>
            <PaneScroll>
              <Scrollbar share={0} down={false} />
            </PaneScroll>
          </PaneBody>
        </Main>
      </Workspace>
      <Footer>
        <span>FreeNAS® © 2016</span>
        <FooterLink href="#">iXsystems, Inc.</FooterLink>
      </Footer>
      <DownloadBar>
        <Download>
          <svg width="13" height="16" viewBox="0 0 13 16" aria-hidden="true">
            <path d="M.5.500h8l4 4v11H.5z" fill="#fff" stroke="#777" />
            <path d="M8.500.500v4h4M3 5.500h3M3 7.500h7M3 9.500h7M3 11.500h5" fill="none" stroke="#888" />
          </svg>
          <FileName>About.odt</FileName>
          <svg width="10" height="7" viewBox="0 0 10 7" aria-hidden="true">
            <path d="M1 6l4-4 4 4" fill="none" stroke="#555" strokeWidth="1.800" />
          </svg>
        </Download>
        <BarActions>
          <ShowAll>Show all</ShowAll>
          <CloseDownloads aria-label="Close downloads bar">
            <CloseGlyph size={11} />
          </CloseDownloads>
        </BarActions>
      </DownloadBar>
    </Window>
  );
}
